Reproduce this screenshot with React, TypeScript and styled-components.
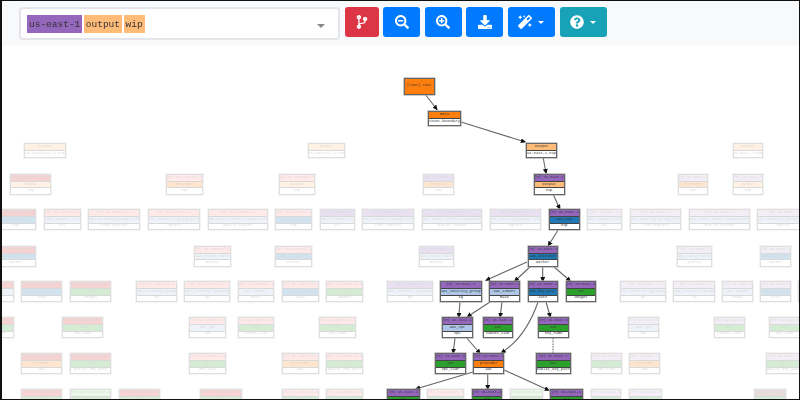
import styled, { createGlobalStyle } from 'styled-components'
import {
  FaCodeBranch,
  FaDownload,
  FaMagic,
  FaQuestionCircle,
  FaSearchMinus,
  FaSearchPlus,
} from 'react-icons/fa'

const GlobalStyle = createGlobalStyle`
  html, body {
    margin: 0;
    padding: 0;
    background: #fff;
  }
`

const Page = styled.div`
  width: 800px;
  height: 400px;
  box-sizing: border-box;
  border: 1px solid #111;
  border-left-width: 2px;
  display: flex;
  flex-direction: column;
  overflow: hidden;
  font-family: 'Liberation Mono', monospace;
`

const Toolbar = styled.header`
  height: 45px;
  flex-shrink: 0;
  box-sizing: border-box;
  padding: 6px 0 0 17px;
  display: flex;
  align-items: flex-start;
  gap: 4.6px;
  background: #f8f9fa;
`

const SelectBox = styled.div`
  width: 321px;
  height: 33px;
  box-sizing: border-box;
  padding: 6px 13px 0 6px;
  display: flex;
  align-items: flex-start;
  gap: 1.5px;
  background: #fff;
  border: 2px solid #e3e5e8;
  border-radius: 4px;
  filter: blur(0.3px);
`

const Tag = styled.span<{ $color: string }>`
  height: 18px;
  padding: 0 2px;
  display: flex;
  align-items: center;
  font-size: 9.5px;
  color: #333;
  background: ${props => props.$color};
`

const Caret = styled.span<{ $size: number; $color: string }>`
  width: 0;
  height: 0;
  border-left: ${props => props.$size}px solid transparent;
  border-right: ${props => props.$size}px solid transparent;
  border-top: ${props => props.$size}px solid ${props => props.$color};
`

const SelectCaret = styled(Caret)`
  margin: 9px 0 0 auto;
`

const Button = styled.button<{ $color: string; $width: number }>`
  width: ${props => props.$width}px;
  height: 30px;
  padding: 0;
  display: flex;
  align-items: center;
  justify-content: center;
  gap: 6px;
  border: none;
  border-radius: 3px;
  color: #fff;
  font-size: 14px;
  background: ${props => props.$color};
  filter: blur(0.2px);
`

const Canvas = styled.main`
  position: relative;
  flex: 1;
  overflow: hidden;
  background: #fff;
  filter: blur(0.45px);
`

const Edges = styled.svg`
  position: absolute;
  top: -46px;
  left: -2px;
  width: 800px;
  height: 400px;
`

const Node = styled.div.attrs<{ $x: number; $y: number; $w: number; $h: number }>(props => ({
  style: { left: props.$x - 2, top: props.$y - 46, width: props.$w, height: props.$h },
}))<{ $faint: boolean }>`
  position: absolute;
  box-sizing: border-box;
  display: grid;
  grid-auto-rows: 1fr;
  background: #fff;
  border: 1px solid #666;
  box-shadow: 0 0 0 0.6px #aaa;
  opacity: ${props => (props.$faint ? 0.2 : 1)};
`

const Cell = styled.div<{ $color?: string }>`
  min-height: 0;
  display: flex;
  align-items: center;
  justify-content: center;
  overflow: hidden;
  white-space: nowrap;
  font-size: 3.7px;
  line-height: 1;
  color: #333;
  background: ${props => props.$color ?? '#fff'};

  & + & {
    border-top: 1px solid #444;
  }
`

const REGION = {
  use1: { name: 'us-east-1', color: '#9467bd' },
  use2: { name: 'us-east-2', color: '#c5b0d5' },
  se: { name: 'ap-southeast-1', color: '#d62728' },
  ne: { name: 'ap-northeast-1', color: '#98df8a' },
  sa: { name: 'sa-east-1', color: '#8c564b' },
  eu: { name: 'eu-central-1', color: '#ff9896' },
}

const KIND = {
  eip: ['aws_eip', '#1f77b4'],
  inst: ['aws_instance', '#1f77b4'],
  key: ['aws_key_pair', '#1f77b4'],
  sg: ['aws_security_group', '#aec7e8'],
  sub: ['aws_subnet', '#aec7e8'],
  vpc: ['aws_vpc', '#aec7e8'],
  acl: ['aws_network_acl', '#aec7e8'],
  rule: ['aws_security_group_rule', '#aec7e8'],
  assoc: ['aws_route_table_association', '#aec7e8'],
  rt: ['aws_route_table', '#aec7e8'],
  igw: ['aws_internet_gateway', '#aec7e8'],
  v: ['var', '#2ca02c'],
  prov: ['provider', '#ff7f0e'],
  out: ['output', '#ffbb78'],
}

type Region = keyof typeof REGION
type Kind = keyof typeof KIND
type Row = [number, number, Region, Kind, string]

// x1, x2, region, kind, label, grouped by graph rank
const RANKS: { y: number; faint: boolean; rows: Row[] }[] = [
  {
    y: 173.5,
    faint: true,
    rows: [
      [10, 51, 'se', 'out', 'eip'],
      [166, 203, 'eu', 'prov', 'aws'],
      [278.5, 315, 'eu', 'out', 'eip'],
      [423, 454, 'use1', 'prov', 'aws'],
      [677.7, 708, 'use2', 'prov', 'aws'],
      [732.5, 763, 'use2', 'out', 'eip'],
    ],
  },
  {
    y: 209,
    faint: true,
    rows: [
      [-5, 36, 'se', 'eip', 'eip'],
      [44, 81, 'eu', 'acl', 'acl'],
      [88, 140, 'eu', 'rule', 'cidr-ingress'],
      [148, 200, 'eu', 'rule', 'egress'],
      [207.5, 268, 'eu', 'assoc', 'public_routes'],
      [275, 312, 'eu', 'eip', 'eip'],
      [320, 354.5, 'use1', 'acl', 'acl'],
      [362, 414, 'use1', 'rule', 'cidr-ingress'],
      [422, 482, 'use1', 'assoc', 'public_routes'],
      [490, 541, 'use1', 'rule', 'egress'],
      [587, 622, 'use2', 'acl', 'acl'],
      [629.7, 681.3, 'use2', 'rule', 'cidr-ingress'],
      [689, 750, 'use2', 'assoc', 'public_routes'],
      [757, 809, 'use2', 'rule', 'egress'],
    ],
  },
  {
    y: 245.5,
    faint: true,
    rows: [
      [-5, 36, 'se', 'inst', 'worker'],
      [194, 231, 'eu', 'rt', 'public'],
      [275, 312, 'eu', 'inst', 'worker'],
      [419, 454, 'use1', 'rt', 'public'],
      [677, 712, 'use2', 'rt', 'public'],
      [760, 791, 'use2', 'inst', 'worker'],
    ],
  },
  {
    y: 281,
    faint: true,
    rows: [
      [-27, 14, 'se', 'sub', 'main'],
      [21.3, 62.3, 'se', 'key', 'auth'],
      [70, 111, 'se', 'v', 'images'],
      [135.7, 176.7, 'eu', 'sg', 'sg'],
      [184, 230, 'eu', 'igw', 'gw'],
      [237.5, 274, 'eu', 'sub', 'main'],
      [282, 318.5, 'eu', 'key', 'auth'],
      [326, 362.7, 'eu', 'v', 'images'],
      [387, 433, 'use1', 'igw', 'gw'],
      [620, 666, 'use2', 'igw', 'gw'],
      [673.3, 715, 'use2', 'sg', 'sg'],
      [722, 753, 'use2', 'sub', 'main'],
      [760, 791, 'use2', 'key', 'auth'],
      [798, 829, 'use2', 'v', 'images'],
    ],
  },
  {
    y: 317,
    faint: true,
    rows: [
      [-27, 14, 'se', 'v', 'subnet_cidr'],
      [62, 103, 'se', 'v', 'key_name'],
      [189, 226, 'eu', 'vpc', 'vpc'],
      [237.5, 274, 'eu', 'v', 'subnet_cidr'],
      [319, 355.7, 'eu', 'v', 'key_name'],
      [628, 659, 'use2', 'vpc', 'vpc'],
      [713.7, 744.7, 'use2', 'v', 'subnet_cidr'],
      [769, 800, 'use2', 'v', 'key_name'],
    ],
  },
  {
    y: 353,
    faint: true,
    rows: [
      [21.3, 62, 'se', 'prov', 'aws'],
      [70, 111, 'se', 'v', 'public_key_path'],
      [189, 226, 'eu', 'v', 'vpc_cidr'],
      [282, 318.5, 'eu', 'prov', 'aws'],
      [326, 362.7, 'eu', 'v', 'public_key_path'],
      [591, 622, 'use2', 'v', 'vpc_cidr'],
      [629, 660, 'use2', 'prov', 'aws'],
      [766, 801, 'use2', 'v', 'public_key_path'],
    ],
  },
  {
    y: 389,
    faint: true,
    rows: [
      [21.3, 62, 'se', 'v', 'ami'],
      [70, 111, 'ne', 'v', 'ami'],
      [119, 160, 'se', 'v', 'ami'],
      [200, 241.7, 'se', 'v', 'ami'],
      [282, 318.5, 'eu', 'v', 'ami'],
      [326, 362.7, 'eu', 'v', 'ami'],
      [427, 464, 'eu', 'v', 'ami'],
      [510, 543, 'ne', 'v', 'ami'],
      [591, 621, 'use2', 'v', 'ami'],
      [629, 662, 'use2', 'v', 'ami'],
      [753.7, 786, 'sa', 'v', 'ami'],
    ],
  },
  { y: 173.5, faint: false, rows: [[533.5, 564.5, 'use1', 'out', 'eip']] },
  { y: 209, faint: false, rows: [[548.5, 580, 'use1', 'eip', 'eip']] },
  { y: 245.5, faint: false, rows: [[527.5, 558, 'use1', 'inst', 'worker']] },
  {
    y: 281,
    faint: false,
    rows: [
      [440, 481.5, 'use1', 'sg', 'sg'],
      [489, 520, 'use1', 'sub', 'main'],
      [527.5, 558, 'use1', 'key', 'auth'],
      [565.5, 596, 'use1', 'v', 'images'],
    ],
  },
  {
    y: 317,
    faint: false,
    rows: [
      [442, 472.7, 'use1', 'vpc', 'vpc'],
      [482.7, 513, 'use1', 'v', 'subnet_cidr'],
      [538, 569, 'use1', 'v', 'key_name'],
    ],
  },
  {
    y: 353,
    faint: false,
    rows: [
      [435, 466, 'use1', 'v', 'vpc_cidr'],
      [473, 504, 'use1', 'prov', 'aws'],
      [535.7, 570.7, 'use1', 'v', 'public_key_path'],
    ],
  },
  {
    y: 389,
    faint: false,
    rows: [
      [387, 420, 'use1', 'v', 'ami'],
      [472, 502, 'use1', 'v', 'ami'],
      [550, 583, 'use1', 'v', 'ami'],
    ],
  },
]

// two row nodes: outputs and the meta node
const SHORT: { x1: number; x2: number; y: number; title: string; color: string; label: string; faint: boolean }[] = [
  { x1: 24, x2: 66, y: 142.5, title: 'output', color: '#ffbb78', label: 'ap-southeast-1-eip', faint: true },
  { x1: 308, x2: 345, y: 142.5, title: 'output', color: '#ffbb78', label: 'eu-central-1-eip', faint: true },
  { x1: 732.5, x2: 763, y: 142.5, title: 'output', color: '#ffbb78', label: 'us-east-2-eip', faint: true },
  { x1: 428, x2: 461, y: 110.5, title: 'meta', color: '#ff7f0e', label: 'count-boundary', faint: false },
  { x1: 526, x2: 557, y: 142.5, title: 'output', color: '#ffbb78', label: 'us-east-1-eip', faint: false },
]

const EDGES = [
  'M425 94L435 107',
  'M461 122L522 141',
  'M543 157L545.5 170',
  'M553 194L558.5 206',
  'M558 230L550 243',
  'M527 262L489 279',
  'M532 265L517 279',
  'M542.7 266V278',
  'M553 266L568 279',
  'M460 302L459 314',
  'M490 302L470 315',
  'M502 302L500.5 314',
  'M546 302L549.5 314',
  'M538 302C530 325 520 340 504 351',
  'M455 338L453.5 350',
  'M466.7 338L478 351',
  'M473 372L419 388',
  'M487.7 374V386',
  'M504 370L546 389',
]

export default function App() {
  return (
    <Page>
      <GlobalStyle />
      <Toolbar>
        <SelectBox>
          <Tag $color="#9467bd">us-east-1</Tag>
          <Tag $color="#ffbb78">output</Tag>
          <Tag $color="#ffbb78">wip</Tag>
          <SelectCaret $size={4} $color="#888" />
        </SelectBox>
        <Button $color="#dc3545" $width={34}>
          <FaCodeBranch />
        </Button>
        <Button $color="#007bff" $width={37}>
          <FaSearchMinus />
        </Button>
        <Button $color="#007bff" $width={37}>
          <FaSearchPlus />
        </Button>
        <Button $color="#007bff" $width={37}>
          <FaDownload />
        </Button>
        <Button $color="#007bff" $width={47}>
          <FaMagic />
          <Caret $size={3.5} $color="#fff" />
        </Button>
        <Button $color="#17a2b8" $width={47}>
          <FaQuestionCircle />
          <Caret $size={3.5} $color="#fff" />
        </Button>
      </Toolbar>
      <Canvas>
        <Edges viewBox="0 0 800 400">
          <defs>
            <marker id="head" markerWidth="6" markerHeight="6" refX="1" refY="2.2" orient="auto">
              <path d="M0 0L5 2.2L0 4.4z" fill="#111" />
            </marker>
          </defs>
          {EDGES.map(d => (
            <path key={d} d={d} fill="none" stroke="#666" strokeWidth="1.1" markerEnd="url(#head)" />
          ))}
          <path d="M553 338V353" fill="none" stroke="#666" strokeWidth="1.1" strokeDasharray="1.5 1.2" />
        </Edges>

        <Node $x={403.5} $y={77.5} $w={31} $h={17} $faint={false}>
          <Cell $color="#ff7f0e">[root] root</Cell>
        </Node>

        {SHORT.map(n => (
          <Node key={n.label} $x={n.x1} $y={n.y} $w={n.x2 - n.x1} $h={15} $faint={n.faint}>
            <Cell $color={n.color}>{n.title}</Cell>
            <Cell>{n.label}</Cell>
          </Node>
        ))}

        {RANKS.flatMap(rank =>
          rank.rows.map(([x1, x2, region, kind, label]) => (
            <Node
              key={`${rank.y}-${x1}-${rank.faint}`}
              $x={x1}
              $y={rank.y}
              $w={x2 - x1}
              $h={21}
              $faint={rank.faint}
            >
              <Cell $color={REGION[region].color}>(M) {REGION[region].name}</Cell>
              <Cell $color={KIND[kind][1]}>{KIND[kind][0]}</Cell>
              <Cell>{label}</Cell>
            </Node>
          )),
        )}
      </Canvas>
    </Page>
  )
}
